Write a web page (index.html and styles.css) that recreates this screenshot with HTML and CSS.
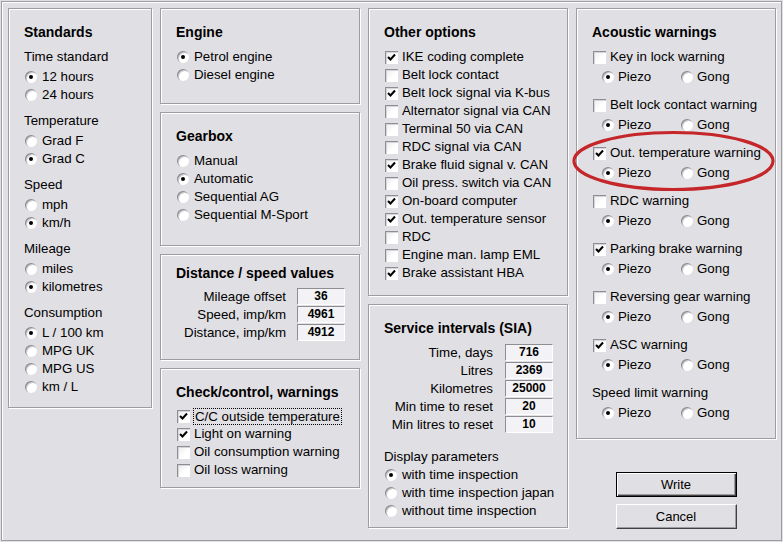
FILE: index.html
```html
<!DOCTYPE html>
<html>
<head>
<meta charset="utf-8">
<link rel="stylesheet" href="styles.css">
</head>
<body>
<div class="window">
  <div class="cols">
    <div class="col">
      <section class="panel h-standards">
        <div class="title">Standards</div>
        <div class="group">
          <div class="label">Time standard</div>
          <div class="opt first"><span class="rb on"></span>12 hours</div>
          <div class="opt"><span class="rb"></span>24 hours</div>
        </div>
        <div class="group">
          <div class="label">Temperature</div>
          <div class="opt first"><span class="rb"></span>Grad F</div>
          <div class="opt"><span class="rb on"></span>Grad C</div>
        </div>
        <div class="group">
          <div class="label">Speed</div>
          <div class="opt first"><span class="rb"></span>mph</div>
          <div class="opt"><span class="rb on"></span>km/h</div>
        </div>
        <div class="group">
          <div class="label">Mileage</div>
          <div class="opt first"><span class="rb"></span>miles</div>
          <div class="opt"><span class="rb on"></span>kilometres</div>
        </div>
        <div class="group">
          <div class="label">Consumption</div>
          <div class="opt first"><span class="rb on"></span>L / 100 km</div>
          <div class="opt"><span class="rb"></span>MPG UK</div>
          <div class="opt"><span class="rb"></span>MPG US</div>
          <div class="opt"><span class="rb"></span>km / L</div>
        </div>
      </section>
    </div>

    <div class="col">
      <section class="panel h-engine">
        <div class="title">Engine</div>
        <div class="opt"><span class="rb on"></span>Petrol engine</div>
        <div class="opt"><span class="rb"></span>Diesel engine</div>
      </section>
      <section class="panel h-gearbox">
        <div class="title">Gearbox</div>
        <div class="opt"><span class="rb"></span>Manual</div>
        <div class="opt"><span class="rb on"></span>Automatic</div>
        <div class="opt"><span class="rb"></span>Sequential AG</div>
        <div class="opt"><span class="rb"></span>Sequential M-Sport</div>
      </section>
      <section class="panel h-distance">
        <div class="title">Distance / speed values</div>
        <div class="field dist"><span class="flabel">Mileage offset</span><span class="val">36</span></div>
        <div class="field dist"><span class="flabel">Speed, imp/km</span><span class="val">4961</span></div>
        <div class="field dist"><span class="flabel">Distance, imp/km</span><span class="val">4912</span></div>
      </section>
      <section class="panel h-check">
        <div class="title">Check/control, warnings</div>
        <div class="opt"><span class="cb on"><svg viewBox="0 0 13 13"><polyline points="3,6 5.5,8.5 10,3.5"/></svg></span><span class="focus">C/C outside temperature</span></div>
        <div class="opt"><span class="cb on"><svg viewBox="0 0 13 13"><polyline points="3,6 5.5,8.5 10,3.5"/></svg></span>Light on warning</div>
        <div class="opt"><span class="cb"></span>Oil consumption warning</div>
        <div class="opt"><span class="cb"></span>Oil loss warning</div>
      </section>
    </div>

    <div class="col">
      <section class="panel h-other">
        <div class="title">Other options</div>
        <div class="opt"><span class="cb on"><svg viewBox="0 0 13 13"><polyline points="3,6 5.5,8.5 10,3.5"/></svg></span>IKE coding complete</div>
        <div class="opt"><span class="cb"></span>Belt lock contact</div>
        <div class="opt"><span class="cb on"><svg viewBox="0 0 13 13"><polyline points="3,6 5.5,8.5 10,3.5"/></svg></span>Belt lock signal via K-bus</div>
        <div class="opt"><span class="cb"></span>Alternator signal via CAN</div>
        <div class="opt"><span class="cb"></span>Terminal 50 via CAN</div>
        <div class="opt"><span class="cb"></span>RDC signal via CAN</div>
        <div class="opt"><span class="cb on"><svg viewBox="0 0 13 13"><polyline points="3,6 5.5,8.5 10,3.5"/></svg></span>Brake fluid signal v. CAN</div>
        <div class="opt"><span class="cb"></span>Oil press. switch via CAN</div>
        <div class="opt"><span class="cb on"><svg viewBox="0 0 13 13"><polyline points="3,6 5.5,8.5 10,3.5"/></svg></span>On-board computer</div>
        <div class="opt"><span class="cb on"><svg viewBox="0 0 13 13"><polyline points="3,6 5.5,8.5 10,3.5"/></svg></span>Out. temperature sensor</div>
        <div class="opt"><span class="cb"></span>RDC</div>
        <div class="opt"><span class="cb"></span>Engine man. lamp EML</div>
        <div class="opt"><span class="cb on"><svg viewBox="0 0 13 13"><polyline points="3,6 5.5,8.5 10,3.5"/></svg></span>Brake assistant HBA</div>
      </section>
      <section class="panel h-service">
        <div class="title">Service intervals (SIA)</div>
        <div class="field svc"><span class="flabel">Time, days</span><span class="val">716</span></div>
        <div class="field svc"><span class="flabel">Litres</span><span class="val">2369</span></div>
        <div class="field svc"><span class="flabel">Kilometres</span><span class="val">25000</span></div>
        <div class="field svc"><span class="flabel">Min time to reset</span><span class="val">20</span></div>
        <div class="field svc"><span class="flabel">Min litres to reset</span><span class="val">10</span></div>
        <div class="group display">
          <div class="label">Display parameters</div>
          <div class="opt"><span class="rb on"></span>with time inspection</div>
          <div class="opt"><span class="rb"></span>with time inspection japan</div>
          <div class="opt"><span class="rb"></span>without time inspection</div>
        </div>
      </section>
    </div>

    <div class="col">
      <section class="panel h-acoustic">
        <div class="title">Acoustic warnings</div>
        <div class="warn">
          <div class="opt"><span class="cb"></span>Key in lock warning</div>
          <div class="pg"><span class="pgi"><span class="rb on"></span>Piezo</span><span class="pgi"><span class="rb"></span>Gong</span></div>
        </div>
        <div class="warn">
          <div class="opt"><span class="cb"></span>Belt lock contact warning</div>
          <div class="pg"><span class="pgi"><span class="rb on"></span>Piezo</span><span class="pgi"><span class="rb"></span>Gong</span></div>
        </div>
        <div class="warn">
          <div class="opt"><span class="cb on"><svg viewBox="0 0 13 13"><polyline points="3,6 5.5,8.5 10,3.5"/></svg></span>Out. temperature warning</div>
          <div class="pg"><span class="pgi"><span class="rb on"></span>Piezo</span><span class="pgi"><span class="rb"></span>Gong</span></div>
        </div>
        <div class="warn">
          <div class="opt"><span class="cb"></span>RDC warning</div>
          <div class="pg"><span class="pgi"><span class="rb on"></span>Piezo</span><span class="pgi"><span class="rb"></span>Gong</span></div>
        </div>
        <div class="warn">
          <div class="opt"><span class="cb on"><svg viewBox="0 0 13 13"><polyline points="3,6 5.5,8.5 10,3.5"/></svg></span>Parking brake warning</div>
          <div class="pg"><span class="pgi"><span class="rb on"></span>Piezo</span><span class="pgi"><span class="rb"></span>Gong</span></div>
        </div>
        <div class="warn">
          <div class="opt"><span class="cb"></span>Reversing gear warning</div>
          <div class="pg"><span class="pgi"><span class="rb on"></span>Piezo</span><span class="pgi"><span class="rb"></span>Gong</span></div>
        </div>
        <div class="warn">
          <div class="opt"><span class="cb on"><svg viewBox="0 0 13 13"><polyline points="3,6 5.5,8.5 10,3.5"/></svg></span>ASC warning</div>
          <div class="pg"><span class="pgi"><span class="rb on"></span>Piezo</span><span class="pgi"><span class="rb"></span>Gong</span></div>
        </div>
        <div class="warn">
          <div class="label">Speed limit warning</div>
          <div class="pg"><span class="pgi"><span class="rb on"></span>Piezo</span><span class="pgi"><span class="rb"></span>Gong</span></div>
        </div>
      </section>
      <div class="buttons">
        <div class="btn default"><span>Write</span></div>
        <div class="btn"><span>Cancel</span></div>
      </div>
    </div>
  </div>
  <svg class="highlight" width="206" height="64" viewBox="0 0 206 64"><ellipse cx="102.5" cy="32" rx="99.5" ry="28.5"/></svg>
</div>
</body>
</html>
```

FILE: styles.css
```css
html, body {
  margin: 0;
  padding: 0;
  background: #e0dfe3;
}
body {
  width: 783px;
  height: 542px;
  overflow: hidden;
  font-family: "Liberation Sans", Arial, sans-serif;
  font-size: 13.3px;
  color: #000;
}
.window {
  position: relative;
  margin: 1px;
  width: 781px;
  height: 540px;
  box-sizing: border-box;
  border: 1px solid #9d9da1;
  box-shadow: inset 1px 1px 0 #fff;
  padding: 6px 0 0 6px;
}
.cols {
  display: flex;
  column-gap: 8px;
  align-items: flex-start;
}
.col {
  display: flex;
  flex-direction: column;
  row-gap: 8px;
  width: 200px;
}
.col:first-child {
  width: 144px;
}
.panel {
  box-sizing: border-box;
  border: 1px solid #9d9da1;
  box-shadow: inset 1px 1px 0 #fff, 1px 1px 0 #fff;
  padding: 14px 4px 0 15px;
}
.h-standards { height: 400px; }
.h-engine { height: 96px; }
.h-gearbox { height: 134px; }
.h-distance { height: 106px; padding-top: 9px; }
.h-check { height: 120px; }
.h-other { height: 288px; }
.h-service { height: 224px; }
.h-acoustic { height: 431px; }

.title {
  font-weight: bold;
  font-size: 14px;
  line-height: 18px;
  height: 18px;
  margin-bottom: 7px;
  white-space: nowrap;
}
.h-check .title,
.h-distance .title {
  margin-bottom: 6px;
}
.label {
  line-height: 18px;
  height: 18px;
  white-space: nowrap;
}
.group + .group {
  margin-top: 8px;
}
.opt {
  display: flex;
  align-items: center;
  height: 18px;
  line-height: 18px;
  white-space: nowrap;
}
.opt.first {
  margin-top: 2px;
}

/* radio button */
.rb {
  position: relative;
  flex: none;
  width: 12px;
  height: 12px;
  margin: 0 5px 0 1px;
  border-radius: 50%;
  background: #fff;
  box-shadow: inset 1px 1px 0 #8e8e92, inset 2px 2px 0 #cfcfd3;
}
.rb.on::after {
  content: "";
  position: absolute;
  left: 4px;
  top: 4px;
  width: 4px;
  height: 4px;
  border-radius: 50%;
  background: #000;
}

/* checkbox */
.cb {
  flex: none;
  width: 13px;
  height: 13px;
  margin: 0 4px 0 1px;
  box-sizing: border-box;
  background: linear-gradient(135deg, #e8e8ec 0%, #fff 60%);
  box-shadow: inset 1px 1px 0 #8e8e92, inset 2px 2px 0 #d6d6da;
}
.cb svg {
  display: block;
  width: 13px;
  height: 13px;
}
.cb polyline {
  fill: none;
  stroke: #000;
  stroke-width: 2;
}
.focus {
  outline: 1px dotted #000;
  outline-offset: 0;
  padding: 0 1px;
  line-height: 15px;
}

/* value fields */
.field {
  display: flex;
  height: 18px;
  line-height: 18px;
  white-space: nowrap;
}
.flabel {
  text-align: right;
}
.dist .flabel { width: 110px; margin-right: 11px; }
.svc .flabel { width: 109px; margin-right: 12px; }
.val {
  box-sizing: border-box;
  width: 48px;
  height: 17px;
  line-height: 15px;
  border: 1px solid;
  border-color: #8e8e92 #fff #fff #8e8e92;
  background: #f3f3f5;
  text-align: center;
  font-weight: bold;
  font-size: 12px;
}
.display {
  margin-top: 14px;
}

/* acoustic */
.warn + .warn {
  margin-top: 10px;
}
.pg {
  display: flex;
  height: 18px;
  line-height: 18px;
  margin-top: 2px;
  padding-left: 9px;
}
.pgi {
  display: flex;
  align-items: center;
  width: 79px;
  white-space: nowrap;
}
.pgi .rb {
  margin-right: 4px;
}

/* buttons */
.buttons {
  margin-top: 25px;
  display: flex;
  flex-direction: column;
  align-items: center;
  row-gap: 7px;
}
.btn {
  box-sizing: border-box;
  width: 121px;
  height: 25px;
  border: 1px solid;
  border-color: #fff #404040 #404040 #fff;
  box-shadow: inset -1px -1px 0 #9d9da1;
  background: #e0dfe3;
  display: flex;
  align-items: center;
  justify-content: center;
  font-size: 13px;
}
.btn.default {
  border: 1px solid #000;
  box-shadow: inset 1px 1px 0 #fff, inset -1px -1px 0 #404040, inset -2px -2px 0 #9d9da1;
}

.highlight {
  position: absolute;
  left: 569px;
  top: 127px;
}
.highlight ellipse {
  fill: none;
  stroke: #c4262a;
  stroke-width: 3.2;
}
```
